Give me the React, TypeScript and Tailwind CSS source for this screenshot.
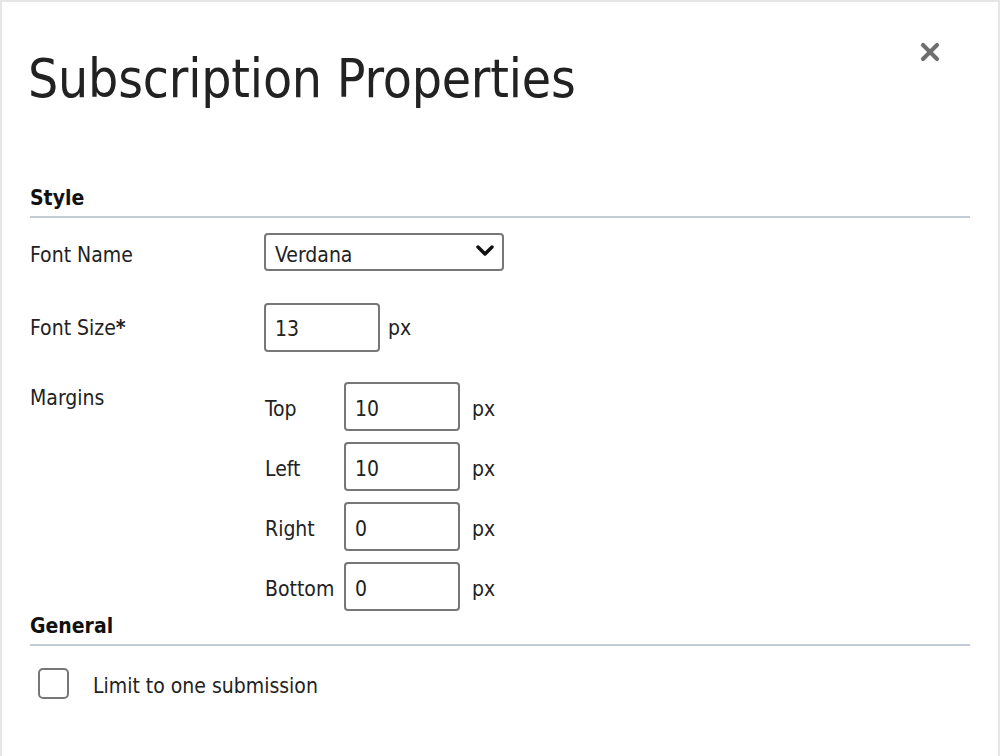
import { X } from "lucide-react";

const font = { fontFamily: '"DejaVu Sans Condensed", "DejaVu Sans", sans-serif' };

function PxInput({ value }: { value: string }) {
  return (
    <input
      type="text"
      defaultValue={value}
      className="w-[116px] h-[49px] px-[9px] pt-[4px] border-2 border-[#777] rounded-[4px] text-[21px] text-[#222] outline-none"
      style={font}
    />
  );
}

function MarginRow({ label, value }: { label: string; value: string }) {
  return (
    <div className="flex items-center h-[48px]">
      <span className="w-[79px] pt-[6px] text-[21px] text-[#222]">{label}</span>
      <PxInput value={value} />
      <span className="ml-[12px] pt-[6px] text-[21px] text-[#222]">px</span>
    </div>
  );
}

export default function App() {
  return (
    <div className="w-[1000px] h-[756px] bg-[#e6e6e6] pl-[2px] pt-[2px] pr-[2px] overflow-hidden" style={font}>
      <div className="relative bg-white h-[760px] pl-[26px] pr-[28px]">
        <button className="absolute top-[36px] right-[54px] text-[#6e6e6e]">
          <X size={28} strokeWidth={3.5} />
        </button>
        <h1 className="pt-[45px] text-[53px] leading-[64px] text-[#222] tracking-[-0.2px]">
          Subscription Properties
        </h1>

        <div className="mt-[75px] pl-[2px]">
          <h2 className="font-bold text-[21px] leading-[24px] text-[#111]">Style</h2>
          <div className="mt-[6px] h-[2px] bg-[#c3ccd5]" />

          <div className="mt-[15px] flex items-center">
            <span className="w-[234px] pt-[7px] text-[21px] text-[#222]">Font Name</span>
            <div className="relative w-[240px] h-[38px] border-2 border-[#777] rounded-[4px] flex items-center pl-[9px] pt-[6px] text-[21px] text-[#222]">
              Verdana
              <svg className="absolute right-[8px] top-[10px]" width="18" height="12" viewBox="0 0 18 12">
                <path d="M2 2 L9 9 L16 2" fill="none" stroke="#111" strokeWidth="3.5" strokeLinecap="round" strokeLinejoin="round" />
              </svg>
            </div>
          </div>

          <div className="mt-[31px] flex items-center">
            <span className="w-[234px] pt-[4px] text-[21px] text-[#222]">
              Font Size<span className="font-bold">*</span>
            </span>
            <PxInput value="13" />
            <span className="ml-[8px] pt-[4px] text-[21px] text-[#222]">px</span>
          </div>

          <div className="mt-[31px] flex">
            <span className="w-[235px] text-[21px] text-[#222]">Margins</span>
            <div className="flex flex-col gap-[12px]">
              <MarginRow label="Top" value="10" />
              <MarginRow label="Left" value="10" />
              <MarginRow label="Right" value="0" />
              <MarginRow label="Bottom" value="0" />
            </div>
          </div>

          <h2 className="mt-[3px] font-bold text-[21px] leading-[24px] text-[#111]">General</h2>
          <div className="mt-[6px] h-[2px] bg-[#c3ccd5]" />

          <label className="mt-[20px] flex items-center">
            <span className="ml-[8px] w-[31px] h-[31px] border-2 border-[#777] rounded-[5px]" />
            <span className="ml-[24px] pt-[5px] text-[21px] text-[#222]">Limit to one submission</span>
          </label>
        </div>
      </div>
    </div>
  );
}
